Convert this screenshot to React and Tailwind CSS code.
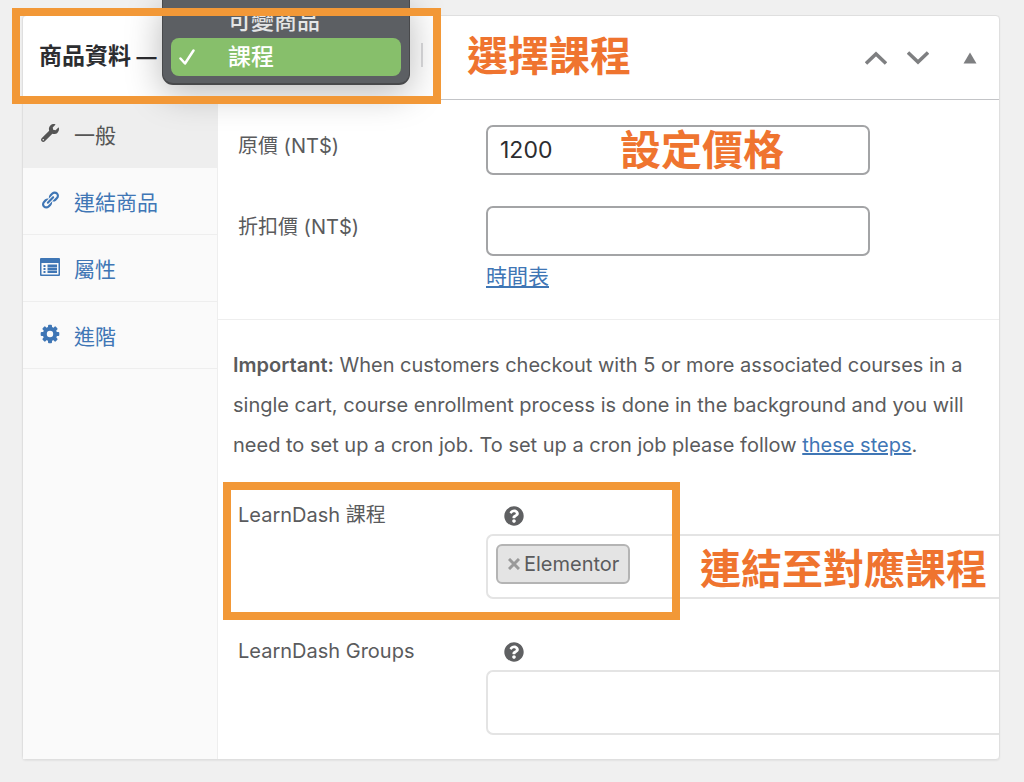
import { useState } from "react";
import { FaWrench, FaQuestionCircle } from "react-icons/fa";

function LinkIcon() {
  return (
    <svg viewBox="0 0 20 20" className="h-5 w-5" fill="currentColor">
      <path d="M17.74 2.760c1.680 1.690 1.680 4.410 0 6.100l-1.530 1.520c-1.120 1.120-2.700 1.470-4.140 1.090l2.620-2.610.760-.770.760-.760c.840-.840.840-2.200 0-3.040-.840-.850-2.200-.850-3.040 0l-.770.760-3.380 3.380c-.370-1.440-.020-3.020 1.100-4.140l1.520-1.530c1.690-1.680 4.420-1.680 6.100 0zM8.590 13.430l5.340-5.340c.420-.420.420-1.100 0-1.520-.440-.430-1.130-.390-1.530 0l-5.330 5.340c-.420.420-.420 1.100 0 1.520.440.430 1.130.390 1.520 0zm-.760 2.290l4.140-4.150c.380 1.440.030 3.020-1.090 4.140l-1.520 1.530c-1.690 1.680-4.410 1.680-6.100 0-1.680-1.680-1.680-4.420 0-6.100l1.530-1.520c1.120-1.120 2.700-1.470 4.140-1.100l-4.140 4.150c-.850.840-.850 2.200 0 3.050.840.840 2.200.840 3.040 0z" />
    </svg>
  );
}

function AttributesIcon() {
  return (
    <svg viewBox="0 0 20 18" className="h-[18px] w-5" fill="currentColor">
      <path
        fillRule="evenodd"
        d="M1 0h18a1 1 0 0 1 1 1v16a1 1 0 0 1-1 1H1a1 1 0 0 1-1-1V1a1 1 0 0 1 1-1zM1.500 5v11.500h17V5z"
      />
      <path d="M3.500 7h2v2h-2zM3.500 10h2v2h-2zM3.500 13h2v2h-2zM7.500 6.500H17V9H7.500zM7.500 9.500H17V12H7.500zM7.500 12.500H17V15H7.500z" />
    </svg>
  );
}

const teeth = [0, 45, 90, 135, 180, 225, 270, 315];

function GearIcon() {
  return (
    <svg viewBox="0 0 20 20" className="h-5 w-5" fill="currentColor">
      <circle cx="10" cy="10" r="5.200" fill="none" stroke="currentColor" strokeWidth="4" />
      {teeth.map((angle) => (
        <rect key={angle} x="8" y="0.700" width="4" height="4" rx="1" transform={`rotate(${angle} 10 10)`} />
      ))}
    </svg>
  );
}

const tabs = [
  { id: "general", label: "一般", icon: <FaWrench size={18} /> },
  { id: "linked", label: "連結商品", icon: <LinkIcon /> },
  { id: "attributes", label: "屬性", icon: <AttributesIcon /> },
  { id: "advanced", label: "進階", icon: <GearIcon /> },
];

function Note({ className, children }) {
  return (
    <span
      className={`pointer-events-none absolute whitespace-nowrap text-[41px] leading-[48px] font-bold text-[#ef742f] ${className}`}
    >
      {children}
    </span>
  );
}

function Frame({ className }) {
  return (
    <div className={`pointer-events-none absolute border-8 border-[#f29837] ${className}`} />
  );
}

function HelpButton() {
  return (
    <button type="button" aria-label="Help" className="ml-[18px] block text-[#5f6062]">
      <FaQuestionCircle size={20} />
    </button>
  );
}

function ProductTypeMenu() {
  return (
    <ul
      role="listbox"
      aria-label="商品類型"
      className="absolute left-[162px] top-0 h-[85px] w-[248px] rounded-b-[11px] border-x border-b-2 border-[#48494b] bg-[#5c5f63] px-2 pt-1 text-[23px] leading-[34px] font-medium text-white shadow-[0_8px_36px_rgba(0,0,0,0.28)]"
    >
      <li role="option" aria-selected="false" className="pl-[57px] text-[#e4e5e6]">
        可變商品
      </li>
      <li
        role="option"
        aria-selected="true"
        className="flex h-[38px] items-center rounded-lg bg-[#87bf6b]"
      >
        <svg
          viewBox="0 0 16 16"
          className="mr-[33px] ml-2 h-4 w-4"
          fill="none"
          stroke="currentColor"
          strokeWidth="2.500"
          strokeLinecap="round"
          strokeLinejoin="round"
        >
          <path d="M1.500 9.500 6 14.500 14.500 1.500" />
        </svg>
        課程
      </li>
    </ul>
  );
}

export default function App() {
  const [activeTab, setActiveTab] = useState("general");
  const [price, setPrice] = useState("1200");
  const [salePrice, setSalePrice] = useState("");

  return (
    <div
      lang="zh-Hant"
      className="relative min-h-screen overflow-hidden bg-[#f0f0f0] pt-[15px] pr-6 pb-[22px] pl-[22px] font-['Inter','Noto_Sans_CJK_TC',sans-serif] text-[20px] text-[#5a5b5d]"
    >
      <div className="rounded-[4px] border border-[#dfdfdf] bg-white shadow-[0_1px_2px_rgba(0,0,0,0.06)]">

        {/* Header */}
        <div className="relative flex h-[84px] items-center justify-between border-b border-[#c3c4c7] pr-[22px] pl-4">
          <h2 className="pb-1 text-[23px] leading-8 font-bold text-[#2c2d30]">
            商品資料 <span className="text-xl">—</span>
          </h2>
          <div className="absolute top-[27px] left-[398px] h-6 w-0.5 bg-[#dcdcde]" />
          <Note className="top-4 left-[444px]">選擇課程</Note>

          <div className="flex items-center text-[#7e7f81]">
            <button type="button" aria-label="Move up" className="mr-5">
              <svg viewBox="0 0 22 14" className="h-3.5 w-[22px]" fill="none" stroke="currentColor" strokeWidth="3.500">
                <path d="M1 12.500 11 3l10 9.500" />
              </svg>
            </button>
            <button type="button" aria-label="Move down" className="mr-[34px]">
              <svg viewBox="0 0 22 14" className="h-3.5 w-[22px]" fill="none" stroke="currentColor" strokeWidth="3.500">
                <path d="M1 1.500 11 11l10-9.500" />
              </svg>
            </button>
            <button type="button" aria-label="Toggle panel">
              <svg viewBox="0 0 14 12" className="h-3 w-3.5" fill="currentColor">
                <path d="M7 0.500 13.500 11.500H.500z" />
              </svg>
            </button>
          </div>
        </div>

        <div className="flex">
          {/* Tabs */}
          <nav className="w-[195px] shrink-0 border-r border-[#eee] bg-[#fafafa] pt-px">
            {tabs.map((tab) => (
              <button
                key={tab.id}
                type="button"
                onClick={() => setActiveTab(tab.id)}
                className={`flex h-[67px] w-full items-center border-b border-[#eee] pt-[3px] pl-[17px] text-left text-[21px] leading-8 ${
                  activeTab === tab.id ? "bg-[#eee] text-[#555]" : "text-[#3f76b5]"
                }`}
              >
                <span className="mr-[14px] flex w-5 justify-center pb-1.5">{tab.icon}</span>
                {tab.label}
              </button>
            ))}
          </nav>

          {/* Panel */}
          <div className="min-w-0 flex-1">
            <div className="border-b border-[#eee] pt-[25px] pb-[26px] pl-5">
              <div className="mb-[31px] flex items-start">
                <label htmlFor="price" className="w-[248px] shrink-0 pt-[5px] leading-8">
                  原價 (NT$)
                </label>
                <div className="relative w-[384px]">
                  <input
                    id="price"
                    type="text"
                    value={price}
                    onChange={(e) => setPrice(e.target.value)}
                    className="block h-[50px] w-full rounded-[7px] border-2 border-[#a3a4a6] bg-white px-3 text-[23px] text-[#2c2d30]"
                  />
                  <Note className="top-px left-[134px]">設定價格</Note>
                </div>
              </div>
              <div className="flex items-start">
                <label htmlFor="sale-price" className="w-[248px] shrink-0 pt-[5px] leading-8">
                  折扣價 (NT$)
                </label>
                <div className="w-[384px]">
                  <input
                    id="sale-price"
                    type="text"
                    value={salePrice}
                    onChange={(e) => setSalePrice(e.target.value)}
                    className="block h-[50px] w-full rounded-[7px] border-2 border-[#a3a4a6] bg-white px-3 text-[23px] text-[#2c2d30]"
                  />
                  <a href="#schedule" className="mt-[5px] inline-block text-[21px] leading-8 text-[#3f76b5] underline">
                    時間表
                  </a>
                </div>
              </div>
            </div>

            <p className="pt-[25px] pr-8 pl-[15px] leading-10">
              <strong className="font-semibold">Important:</strong> When customers checkout with 5 or
              more associated courses in a single cart, course enrollment process is done in the
              background and you will need to set up a cron job. To set up a cron job please follow{" "}
              <a href="#steps" className="text-[#3f76b5] underline">these steps</a>.
            </p>

            <div className="relative mt-[34px] flex items-start pl-5">
              <label htmlFor="courses" className="w-[248px] shrink-0 leading-8">
                LearnDash 課程
              </label>
              <div className="min-w-0 flex-1 pt-[7px]">
                <HelpButton />
                <div className="mt-2 flex h-[65px] items-start rounded-l-[7px] border-y-2 border-l-2 border-[#e4e4e4] pt-2 pl-2">
                  <span className="flex h-10 items-center rounded-[6px] border-2 border-[#b4b4b4] bg-[#e4e4e4] pr-[9px] pl-[10px] leading-8">
                    <button type="button" aria-label="Remove Elementor" className="mr-1 text-[#999]">
                      <svg viewBox="0 0 12 12" className="h-3 w-3" fill="none" stroke="currentColor" strokeWidth="3">
                        <path d="M1 1l10 10M11 1 1 11" />
                      </svg>
                    </button>
                    Elementor
                  </span>
                  <input id="courses" type="text" className="h-10 min-w-0 flex-1 outline-none" />
                </div>
              </div>
              <Frame className="top-[-17px] left-[5px] h-[138px] w-[457px]" />
              <Note className="top-[46px] left-[482px]">連結至對應課程</Note>
            </div>

            <div className="mt-9 flex items-start pb-6 pl-5">
              <label htmlFor="groups" className="w-[248px] shrink-0 leading-8">
                LearnDash Groups
              </label>
              <div className="min-w-0 flex-1 pt-[7px]">
                <HelpButton />
                <input
                  id="groups"
                  type="text"
                  className="mt-2 block h-[65px] w-full rounded-l-[7px] border-y-2 border-l-2 border-[#e4e4e4] px-2"
                />
              </div>
            </div>
          </div>
        </div>
      </div>

      <ProductTypeMenu />
      <Frame className="top-2 left-3 h-24 w-[429px]" />
    </div>
  );
}
